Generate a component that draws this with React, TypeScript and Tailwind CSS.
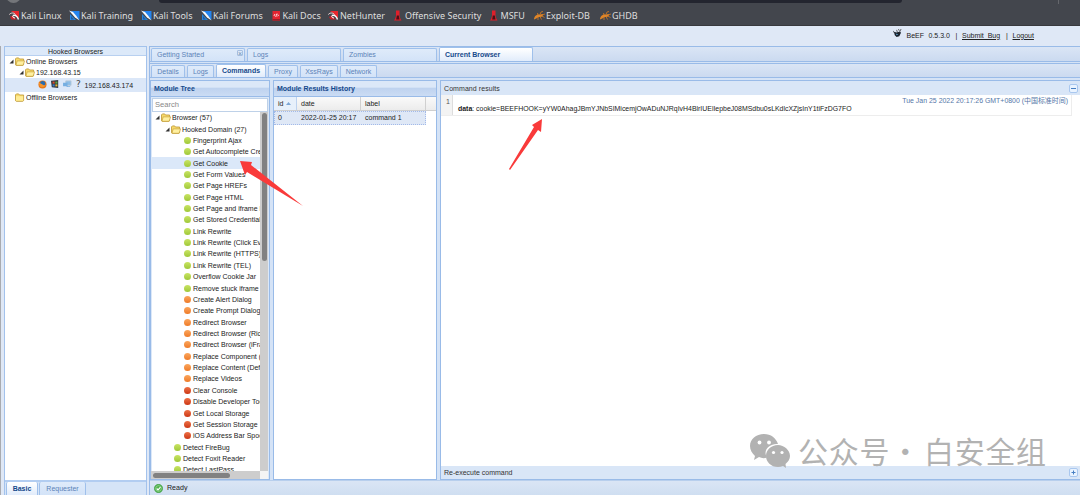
import clsx from "clsx";

const bookmarks = [
  { title: "Kali Linux", icon: "red", width: "w-[60px]" },
  { title: "Kali Training", icon: "blue", width: "w-[72px]" },
  { title: "Kali Tools", icon: "blue", width: "w-[60px]" },
  { title: "Kali Forums", icon: "blue", width: "w-[69.5px]" },
  { title: "Kali Docs", icon: "docs", width: "w-[57.5px]" },
  { title: "NetHunter", icon: "red", width: "w-[65px]" },
  { title: "Offensive Security", icon: "tower", width: "w-[95.5px]" },
  { title: "MSFU", icon: "tower", width: "w-[45.5px]" },
  { title: "Exploit-DB", icon: "bug", width: "w-[66px]" },
  { title: "GHDB", icon: "bug", width: "w-[50px]" },
];

const modules = [
  { title: "Fingerprint Ajax", color: "green" },
  { title: "Get Autocomplete Creds", color: "green" },
  { title: "Get Cookie", color: "green" },
  { title: "Get Form Values", color: "green" },
  { title: "Get Page HREFs", color: "green" },
  { title: "Get Page HTML", color: "green" },
  { title: "Get Page and iframe HTML", color: "green" },
  { title: "Get Stored Credentials", color: "green" },
  { title: "Link Rewrite", color: "green" },
  { title: "Link Rewrite (Click Events)", color: "green" },
  { title: "Link Rewrite (HTTPS)", color: "green" },
  { title: "Link Rewrite (TEL)", color: "green" },
  { title: "Overflow Cookie Jar", color: "green" },
  { title: "Remove stuck iframe", color: "green" },
  { title: "Create Alert Dialog", color: "orange" },
  { title: "Create Prompt Dialog", color: "orange" },
  { title: "Redirect Browser", color: "orange" },
  { title: "Redirect Browser (Rickroll)", color: "orange" },
  { title: "Redirect Browser (iFrame)", color: "orange" },
  { title: "Replace Component (Deface)", color: "orange" },
  { title: "Replace Content (Deface)", color: "orange" },
  { title: "Replace Videos", color: "orange" },
  { title: "Clear Console", color: "red" },
  { title: "Disable Developer Tools", color: "red" },
  { title: "Get Local Storage", color: "red" },
  { title: "Get Session Storage", color: "red" },
  { title: "iOS Address Bar Spoofing", color: "red" },
];

const detectModules = ["Detect FireBug", "Detect Foxit Reader", "Detect LastPass"];

const BookmarkIcon = ({ icon }: { icon: string }) => (
  <svg viewBox="0 0 11 11" className="size-[11px] shrink-0">
    {icon === "red" && (
      <>
        <path d="M2 1H10V8L7.500 6.500 5 3Z" fill="#e8282e" />
        <path d="M1 7 3.500 5.500 8 9.500H2.500Z" fill="#c92128" />
        <path d="M.3 4.500C2 2.500 5 2.500 6.500 4.500" stroke="#f4dada" strokeWidth="1" fill="none" />
        <path d="M4 5.500C6.500 4.500 8.500 6.500 9.500 9.500" stroke="#fff" strokeWidth="1.400" fill="none" />
        <path d="M4 5.500C3 7 4.500 8 6 8" stroke="#fff" strokeWidth="1" fill="none" />
      </>
    )}
    {icon === "blue" && (
      <>
        <path d="M2 1H10.500V10L6 6Z" fill="#2384ef" />
        <path d="M1 4 7 10H1Z" fill="#2384df" />
        <path d="M0 .5 4 2 7 5.500 10.500 10.500 6 7.500 3 4Z" fill="#f5f9fd" />
        <path d="M2 6 5 9.500H2Z" fill="#245c9c" />
      </>
    )}
    {icon === "docs" && (
      <>
        <path d="M1.500 1H9V10.500H1.500Z" fill="#e32430" />
        <path d="M1.500 9H9V10.500H1.500Z" fill="#9c1e27" />
        <path d="M4.200 4 3 5.200 4.200 6.400M6.300 4 7.500 5.200 6.300 6.400M5.700 3.700 4.900 6.700" stroke="#fff" strokeWidth=".8" fill="none" />
      </>
    )}
    {icon === "tower" && (
      <>
        <path d="M3 .5H6.500V6L7.500 9 8.500 10.500H1L2 9 3 6Z" fill="#df1f2a" />
        <path d="M3.800 5.500H5.800L6.500 9.500H3.200Z" fill="#4a1118" />
      </>
    )}
    {icon === "bug" && (
      <>
        <path d="M0 9.500C0 6 3 4 6 4.500L9 4 8.500 6.500 6 7C4 6.500 3 8.500 0 9.500Z" fill="#e08527" />
        <path d="M4 5 3.500 3M6 4.500 7 2 9 1.500M6 6.500 7.500 9.500M4 7 4 10M8 5 11 4M8 6 10.500 7.500" stroke="#d57b22" strokeWidth=".8" fill="none" />
      </>
    )}
  </svg>
);

const Folder = ({ open = true }: { open?: boolean }) => (
  <svg viewBox="0 0 11 10" className="mr-px h-[9px] w-[10px] shrink-0">
    <path d="M.5 2 1.5 1H4L5 2.2H9.5V8.5L8.5 9.3H1.5L.5 8.5Z" fill="#f7d96b" stroke="#b58d26" strokeWidth=".8" />
    {open ? (
      <path d="M2.4 4.3H10.6L9 9.2H1Z" fill="#fff0a0" stroke="#c39b31" strokeWidth=".7" />
    ) : (
      <path d="M1 3.5H9V8.5H1Z" fill="#ffec95" />
    )}
  </svg>
);

const Arrow = () => (
  <svg viewBox="0 0 5 5" className="size-[5px] shrink-0">
    <path d="M4.5 .5V4.5H.5Z" fill="#333" />
  </svg>
);

const Dot = ({ color }: { color: string }) => (
  <span
    className={clsx(
      "mr-[2px] size-[7px] shrink-0 rounded-full bg-linear-to-b",
      color === "green" && "from-[#c9e463] to-[#9fc837]",
      color === "orange" && "from-[#fba65c] to-[#ee7a25]",
      color === "red" && "from-[#ee7045] to-[#cb3512]"
    )}
  />
);

const Tab = ({ title, active, className }: { title: string; active?: boolean; className: string }) => (
  <div
    className={clsx(
      "flex shrink-0 items-center rounded-t-[2px] border border-b-0 border-[#9fc0eb] pb-px",
      active
        ? "bg-linear-to-b from-white to-[#e1ecfb] font-bold text-[#15498b]"
        : "bg-linear-to-b from-[#dfebfa] to-[#d3e3f8] text-[#5c83b8]",
      className
    )}
  >
    {title}
  </div>
);

const Sidebar = () => (
  <aside className="flex w-[143px] shrink-0 flex-col border-x border-t border-[#a3c2ec] bg-white">
    <div className="flex h-[9px] shrink-0 items-center justify-center border-b border-[#b8d0f0] bg-[#dce9f9]">Hooked Browsers</div>
    <div className="flex flex-1 flex-col">
      <div className="flex h-[11.5px] items-center pl-[4px]">
        <Arrow />
        <span className="w-px" />
        <Folder />
        <span>Online Browsers</span>
      </div>
      <div className="flex h-[10.5px] items-center pl-[14px]">
        <Arrow />
        <span className="w-px" />
        <Folder />
        <span>192.168.43.15</span>
      </div>
      <div className="flex h-[14px] items-center bg-[#dbe7f8] pl-[33px]">
        <svg viewBox="0 0 10 10" className="mb-[2px] size-[9px]">
          <circle cx="5" cy="5" r="4.5" fill="#e77616" />
          <circle cx="5.2" cy="4" r="2.9" fill="#286caf" />
          <path d="M.7 2.5 3 4 5 5 7 6 8.5 5C8 8 4 9 2 7Z" fill="#f7942b" />
        </svg>
        <svg viewBox="0 0 10 10" className="mb-[2px] ml-[4px] size-[8px]">
          <path d="M0 1 9 0V10L1 9Z" fill="#343840" />
          <path d="M2 2H4.5V4.5H2Z" fill="#e34a29" />
          <path d="M5.5 2H8V4.5H5.5Z" fill="#61a938" />
          <path d="M2 5.5H4.5V8H2Z" fill="#367dcd" />
          <path d="M5.5 5.5H8V8H5.5Z" fill="#edb62a" />
        </svg>
        <svg viewBox="0 0 10 9" className="mb-[2px] ml-[4px] h-[8px] w-[9px]">
          <path d="M3 1H9V6H3Z" fill="#8bbce6" stroke="#b9c9d8" />
          <path d="M0 3H5V7H0ZM4 7H8V8H4Z" fill="#75aee1" />
        </svg>
        <span className="mb-[2px] ml-[4px] w-[8.5px] font-['DejaVu_Sans'] text-[9px] leading-none text-[#444]">?</span>
        <span className="pt-px">192.168.43.174</span>
      </div>
      <div className="flex h-[11px] items-center pl-[10px]">
        <Folder open={false} />
        <span>Offline Browsers</span>
      </div>
    </div>
    <div className="flex h-[15px] shrink-0 items-end border-t-2 border-[#b2cdf1] bg-[#d5e4f7]">
      <Tab title="Basic" active className="ml-px h-[13px] w-[32px] justify-center border-t-0" />
      <Tab title="Requester" className="ml-px h-[13px] w-[47px] justify-center self-start border-t-0" />
    </div>
  </aside>
);

const PanelTitle = ({ title }: { title: string }) => (
  <div className="flex h-[16px] shrink-0 items-center border-b border-[#99bbe8] bg-linear-to-b from-[#dce8f8] from-40% via-[#bfd3ef] via-50% to-[#cbdcf4] px-[3px] pb-px font-bold text-[#15498b]">
    {title}
  </div>
);

const ModuleTree = () => (
  <section className="flex w-[120px] shrink-0 flex-col border border-[#99bbe8] bg-[#dbe8f8]">
    <PanelTitle title="Module Tree" />
    <div className="mx-px mt-px flex h-[14px] shrink-0 items-center border border-[#bed1e8] bg-white px-[2px] text-[7.6px] text-[#888]">Search</div>
    <div className="flex min-h-0 flex-1 border-l border-[#dce8f8]">
      <div className="min-w-0 flex-1 overflow-hidden bg-white whitespace-nowrap">
        <div className="flex h-[11.36px] items-center pl-[3px]">
          <Arrow />
          <span className="w-px" />
          <Folder />
          <span>Browser (57)</span>
        </div>
        <div className="flex h-[11.36px] items-center pl-[13px]">
          <Arrow />
          <span className="w-px" />
          <Folder />
          <span>Hooked Domain (27)</span>
        </div>
        {modules.map(({ title, color }) => (
          <div key={title} className={clsx("flex h-[11.36px] items-center pl-[32px]", title === "Get Cookie" && "bg-[#dbe8f9]")}>
            <Dot color={color} />
            <span>{title}</span>
          </div>
        ))}
        {detectModules.map((title) => (
          <div key={title} className="flex h-[11.36px] items-center pl-[22px]">
            <Dot color="green" />
            <span>{title}</span>
          </div>
        ))}
      </div>
      <div className="mr-px w-[8px] shrink-0 bg-[#cdcdcd] px-[1.5px] pt-px">
        <div className="h-[148px] rounded-full bg-[#818181]" />
      </div>
    </div>
    <div className="mr-px flex h-[8px] shrink-0 bg-[#cdcdcd] py-[1.5px] pl-[2px]">
      <div className="w-[77px] rounded-full bg-[#818181]" />
      <div className="-my-[1.5px] ml-auto w-[8px] bg-[#f4f4f4]" />
    </div>
  </section>
);

const History = () => (
  <section className="ml-[3px] flex w-[164px] shrink-0 flex-col border border-[#99bbe8] bg-white">
    <PanelTitle title="Module Results History" />
    <div className="flex h-[14px] shrink-0 border-b border-[#cfcfcf] bg-linear-to-b from-[#fafafa] to-[#ececec]">
      <div className="flex w-[23px] items-center border-r border-[#bdd2ef] bg-[#e7f0fb] pl-[4px]">
        id
        <svg viewBox="0 0 5 3" className="ml-[3px] h-[3px] w-[5px]">
          <path d="M0 3 2.5 0 5 3Z" fill="#7ba5d5" />
        </svg>
      </div>
      <div className="flex w-[64px] items-center border-r border-[#d0d0d0] pl-[4px]">date</div>
      <div className="flex w-[65px] items-center border-r border-[#d0d0d0] pl-[4px]">label</div>
    </div>
    <div className="flex h-[14px] w-[152px] shrink-0 items-center border border-dotted border-[#a3bae9] bg-[#dfe8f6] pb-px">
      <span className="w-[23px] pl-[3px]">0</span>
      <span className="w-[64px] pl-[3px]">2022-01-25 20:17</span>
      <span className="pl-[3px]">command 1</span>
    </div>
  </section>
);

const ToolButton = ({ plus }: { plus?: boolean }) => (
  <svg viewBox="0 0 9 9" className="size-[9px]">
    <rect x=".5" y=".5" width="8" height="8" rx="1.5" fill="#e9f3ff" stroke="#a9c7ef" />
    <path d={plus ? "M2.5 4.5H6.5M4.5 2.5V6.5" : "M2 4.5H7"} stroke="#477fc3" />
  </svg>
);

const Results = () => (
  <section className="ml-[3px] flex min-w-0 flex-1 flex-col border-y border-l border-[#99bbe8] bg-white">
    <div className="flex h-[14px] shrink-0 items-center justify-between bg-[#d9e6f7] pr-[2px] pl-[3px] tracking-[0.01em] text-[#333]">
      Command results
      <ToolButton />
    </div>
    <div className="mr-[8px] flex h-[21px] shrink-0 border-r border-b border-[#ededed]">
      <div className="w-[12px] shrink-0 border-r border-[#ddd] bg-[#f3f3f3] pt-[2px] pl-[5px] leading-[9px] text-[#555]">1</div>
      <div className="flex flex-1 flex-col pl-[5px] whitespace-nowrap">
        <div className="mr-[3px] h-[9px] pt-[1px] text-right text-[6.95px] leading-[9px] text-[#5577a8]">Tue Jan 25 2022 20:17:26 GMT+0800 (中国标准时间)</div>
        <div className="text-[6.93px] leading-[9px]">
          <b>data</b>: cookie=BEEFHOOK=yYW0AhagJBmYJNbSIMicemjOwADuNJRqIvH4BlrIUElIepbeJ08MSdbu0sLKdlcXZjsInY1tiFzDG7FO
        </div>
      </div>
    </div>
    <div className="flex-1" />
    <div className="flex h-[13px] shrink-0 items-center justify-between bg-[#d9e6f7] pr-[2px] pl-[3px] text-[#333]">
      Re-execute command
      <ToolButton plus />
    </div>
  </section>
);

const App = () => (
  <main className="relative flex h-[495px] w-[1080px] flex-col overflow-hidden bg-[#dfe8f6] font-['Liberation_Sans','Noto_Sans_CJK_SC',sans-serif] text-[7px] leading-none text-[#222]">
    <header className="relative h-[26px] shrink-0 overflow-hidden border-b border-[#38393d] bg-[#43464d] font-['Noto_Sans'] text-[9px] text-[#dedede]">
      <div className="ml-[159px] h-[3px] w-[743px] rounded-b-[3px] bg-[#23252f]" />
      <div className="absolute -top-[12px] left-[6px] size-[15px] rounded-full bg-[#74767a]" />
      <div className="absolute top-0 left-[1058px] h-[4px] w-px bg-[#65676c]" />
      <nav className="flex h-[25px] items-center pl-[9px] whitespace-nowrap">
        {bookmarks.map(({ title, icon, width }) => (
          <div key={title} className={clsx("flex shrink-0 items-center gap-px", width)}>
            <BookmarkIcon icon={icon} />
            <span>{title}</span>
          </div>
        ))}
      </nav>
    </header>
    <div className="flex h-[20px] shrink-0 items-center pb-[2px] pl-[893px] whitespace-pre">
      <svg viewBox="0 0 10 10" className="mr-[4.5px] mb-[3px] size-[9px]">
        <path d="M1 3 4 4 7 3 9 4 7 8 4 9 2 7Z" fill="#19212b" />
        <path d="M1 4 0 2M5 4 4 1M7 4 9 0M7 2 6 0" stroke="#333" strokeWidth=".8" />
        <path d="M3 5 6 6 4 7Z" fill="#5d9bc4" />
      </svg>
      <span className="w-[22px]">BeEF</span>
      <span className="w-[27px]">0.5.3.0</span>
      <span className="w-[6.5px]">|</span>
      <a className="w-[39px] underline">Submit  Bug</a>
      <span className="ml-[5px] w-[6.5px]">|</span>
      <a className="underline">Logout</a>
    </div>
    <div className="flex min-h-0 flex-1 border-l border-[#a9abb0] pl-[3px]">
      <Sidebar />
      <div className="ml-[2px] flex min-w-0 flex-1 flex-col border-t border-l border-[#99bbe8] bg-[#d5e3f6]">
        <div className="flex h-[15px] shrink-0 items-end gap-[2px] border-b border-[#99bbe8] bg-linear-to-b from-[#dae5f5] to-[#cbdaf0] pl-px">
          <div className="relative">
            <Tab title="Getting Started" className="h-[13px] w-[94px] pl-[5px]" />
            <span className="absolute top-[2px] right-[2px] flex size-[6px] items-center justify-center rounded-[1px] border border-[#a6bedf] text-[7px] text-[#6e8caf]">×</span>
          </div>
          <Tab title="Logs" className="h-[13px] w-[94px] pl-[5px]" />
          <Tab title="Zombies" className="h-[13px] w-[94px] pl-[5px]" />
          <Tab title="Current Browser" active className="h-[14px] w-[94px] pl-[5px]" />
        </div>
        <div className="mt-[1px] flex h-[15px] shrink-0 items-end gap-[2px] border-t border-b border-[#99bbe8] bg-linear-to-b from-[#dae5f5] to-[#cbdaf0] pl-px">
          <Tab title="Details" className="h-[12px] w-[34px] justify-center" />
          <Tab title="Logs" className="h-[12px] w-[27px] justify-center" />
          <Tab title="Commands" active className="h-[13px] w-[50px] justify-center" />
          <Tab title="Proxy" className="h-[12px] w-[30px] justify-center" />
          <Tab title="XssRays" className="h-[12px] w-[38px] justify-center" />
          <Tab title="Network" className="h-[12px] w-[37px] justify-center" />
        </div>
        <div className="mt-[2px] flex min-h-0 flex-1">
          <ModuleTree />
          <History />
          <Results />
        </div>
        <div className="flex h-[15px] shrink-0 items-center border-t border-[#b8cfed] bg-linear-to-b from-[#dae5f5] to-[#cfdef1] pl-[4px]">
          <svg viewBox="0 0 10 10" className="mr-[4px] size-[9px]">
            <circle cx="5" cy="5" r="4.6" fill="#4fb34e" stroke="#33933a" strokeWidth=".6" />
            <circle cx="5" cy="5" r="3.2" fill="none" stroke="#b9e4ae" strokeWidth=".6" />
            <path d="M3 5 4.5 6.5 7.2 3.6" fill="none" stroke="#fff" strokeWidth="1.2" />
          </svg>
          <span className="pt-px text-[7.1px]">Ready</span>
        </div>
      </div>
    </div>

    {/* pointer arrows */}
    <svg viewBox="0 0 1080 495" className="pointer-events-none absolute inset-0 size-full">
      <path d="M240 161 252 162 251 165 303 206 247 172 245 175Z" fill="#f93a3a" />
      <path d="M542 119 541 132 538 130 510 170 509 169 534 127 532 125Z" fill="#f93a3a" />
    </svg>

    {/* channel watermark */}
    <div className="absolute top-[432px] left-[749px] flex items-center text-[#b2b2b2]">
      <svg viewBox="0 0 42 36" className="mb-[4px] h-[36px] w-[42px]">
        <path d="M15 2C7 2 1 7 1 14 1 18 3 21 6 24L5 28 10 25Q14 27 18 25.500C13 17 22 11 29 12 27 6 22 2 15 2Z" fill="currentColor" />
        <path d="M29 13C22 13 17 18 17 24S22 35 29 35Q32 35 34 34L37 36 36.500 32C39 30 41 27 41 24 41 18 35 13 29 13Z" fill="currentColor" />
        <g fill="#fff">
          <circle cx="10.500" cy="10.500" r="1.9" />
          <circle cx="20" cy="10.500" r="1.9" />
          <circle cx="24.500" cy="20.500" r="1.6" />
          <circle cx="33" cy="20.500" r="1.6" />
        </g>
      </svg>
      <div className="mb-[4px] ml-[7px] flex font-['Noto_Sans_CJK_SC',sans-serif] text-[30px] leading-[36px] tracking-[0.7px] whitespace-nowrap">
        <span className="w-[93px]">公众号</span>
        <span className="flex w-[33px] justify-center pr-[4px]">·</span>
        <span>白安全组</span>
      </div>
    </div>
  </main>
);

export default App;
